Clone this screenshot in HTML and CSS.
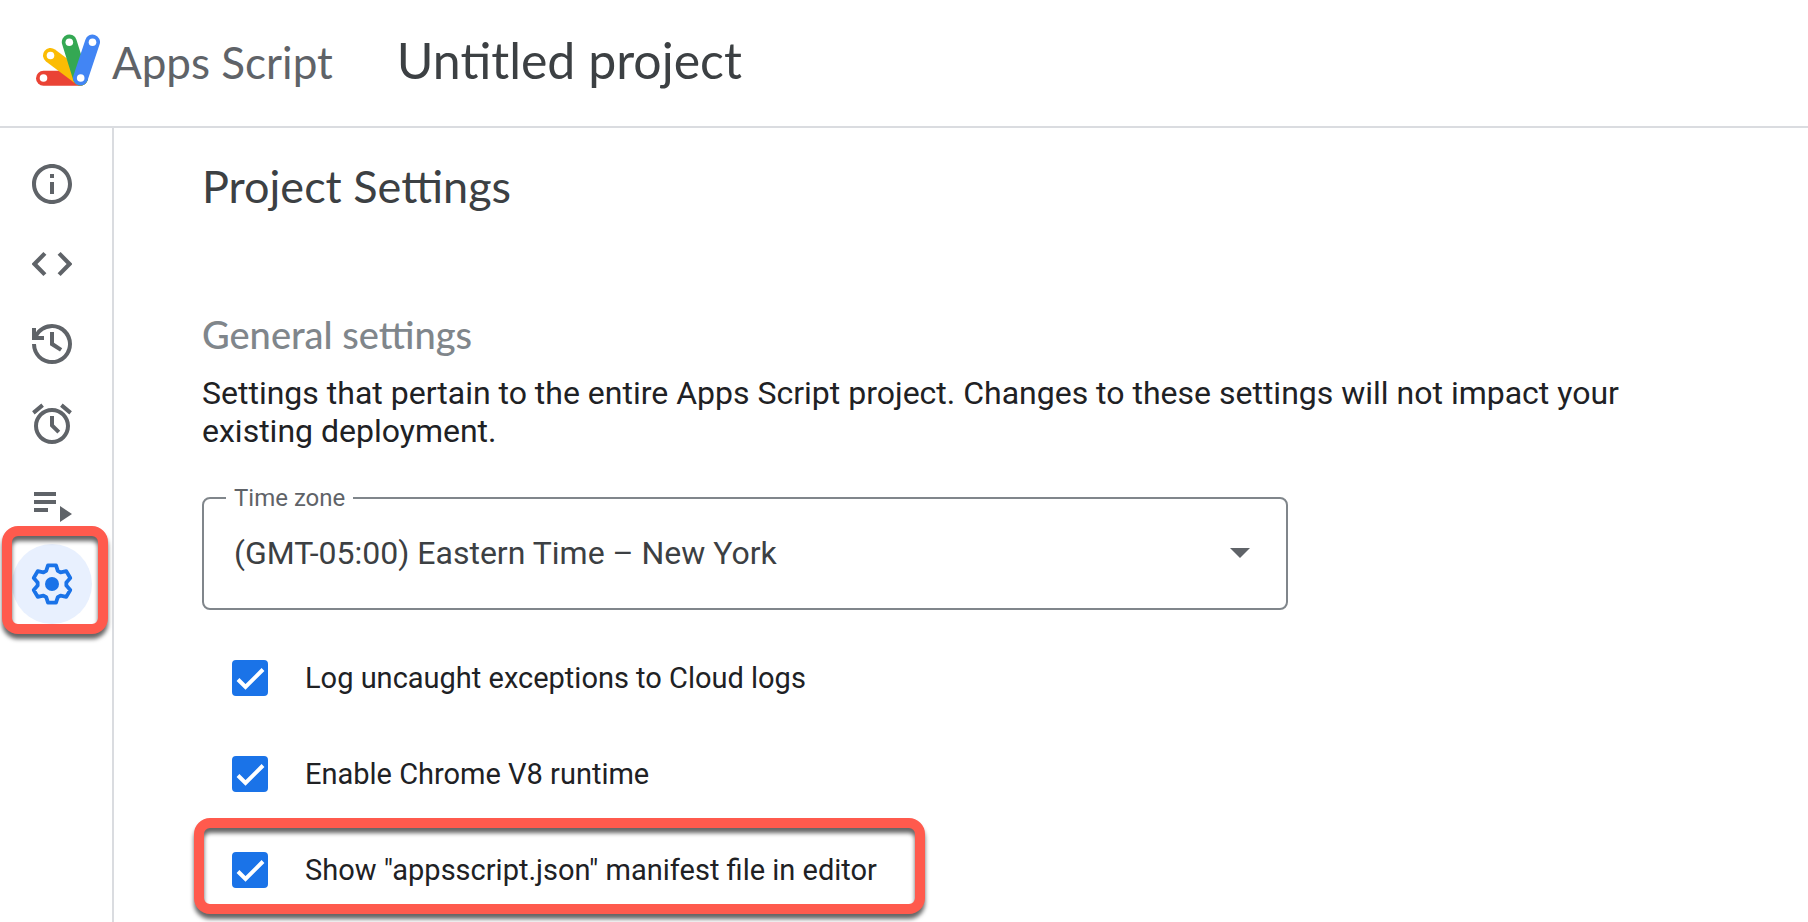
FILE: index.html
```html
<!DOCTYPE html>
<html lang="en">
<head>
<meta charset="utf-8">
<meta name="viewport" content="width=device-width, initial-scale=1">
<title>Untitled project - Project Settings - Apps Script</title>
<link rel="stylesheet" href="styles.css">
</head>
<body>
<header class="topbar">
  <a class="brand" href="#">
    <svg class="brand-logo" viewBox="0 0 64 52" aria-hidden="true" fill="none" stroke-width="15" stroke-linecap="round">
      <path d="M7.5 44.2H44" stroke="#ea4335"/>
      <path d="M14.5 21.5L44.5 44" stroke="#fbbc04"/>
      <path d="M33.3 8L44.5 44" stroke="#34a853"/>
      <path d="M56.5 8L44.5 44" stroke="#4285f4"/>
      <g fill="#fff">
        <circle cx="7.5" cy="44" r="3.8"/>
        <circle cx="14.5" cy="21.5" r="3.8"/>
        <circle cx="33.3" cy="8.2" r="3.8"/>
        <circle cx="56.5" cy="8.2" r="3.8"/>
        <circle cx="44.7" cy="44" r="3.8"/>
      </g>
    </svg>
    <span class="brand-name">Apps Script</span>
  </a>
  <span class="project-name">Untitled project</span>
</header>
<div class="workspace">
  <nav class="rail" aria-label="Project">
    <button class="rail-item" type="button" aria-label="Overview">
      <svg class="icon" viewBox="0 0 24 24"><path d="M11 7h2v2h-2zm0 4h2v6h-2zm1-9C6.48 2 2 6.480 2 12s4.480 10 10 10 10-4.480 10-10S17.520 2 12 2zm0 18c-4.410 0-8-3.590-8-8s3.590-8 8-8 8 3.590 8 8-3.590 8-8 8z"/></svg>
    </button>
    <button class="rail-item" type="button" aria-label="Editor">
      <svg class="icon" viewBox="0 0 24 24"><path d="M7.700 18L9.200 16.600 4.700 12 9.200 7.400 7.700 6 2 11.700v.6zM16.300 18L14.800 16.600 19.300 12 14.800 7.400 16.300 6 22 11.700v.6z"/></svg>
    </button>
    <button class="rail-item" type="button" aria-label="Project history">
      <svg class="icon" viewBox="0 0 24 24"><path d="M12 2C8.700 2 5.800 3.600 4 6.070V4H2v6h6V8H5.100A8 8 0 1 1 4 12H2A10 10 0 1 0 12 2zm-1 4v6.600l5 3.200 1.100-1.700L13 11.400V6z"/></svg>
    </button>
    <button class="rail-item" type="button" aria-label="Triggers">
      <svg class="icon" viewBox="0 0 24 24"><path d="M17.337 1.810l4.607 3.845-1.280 1.535-4.610-3.843zm-10.674 0l1.282 1.536L3.337 7.190l-1.280-1.536zM12 4c-4.970 0-9 4.030-9 9s4.030 9 9 9 9-4.030 9-9-4.030-9-9-9zm0 16c-3.860 0-7-3.140-7-7s3.140-7 7-7 7 3.140 7 7-3.140 7-7 7z"/><path d="M12 8v4.700l3.400 3.400" fill="none" stroke="currentColor" stroke-width="2"/></svg>
    </button>
    <button class="rail-item" type="button" aria-label="Executions">
      <svg class="icon" viewBox="0 0 24 24"><path d="M3 6h11v2H3zm0 4h11v2H3zm0 4h7v2H3zm13-1v8l6-4z"/></svg>
    </button>
    <button class="rail-item rail-item-active" type="button" aria-label="Project Settings" aria-current="page">
      <svg class="icon" viewBox="0 0 24 24"><path d="M9.100 5.400L10 2.700h4l.9 2.700 1.370.8 2.870-.63 2 3.460-1.970 2.180v1.580l1.970 2.180-2 3.460-2.870-.63-1.370.8-.9 2.700h-4l-.9-2.700-1.370-.8-2.870.63-2-3.460 1.970-2.180v-1.580L2.860 9.030l2-3.460 2.870.63z" fill="none" stroke="currentColor" stroke-width="1.900" stroke-linejoin="round"/><circle cx="12" cy="12" r="3.500"/></svg>
      <span class="callout callout-rail"></span>
    </button>
  </nav>
  <main class="content">
    <h1 class="page-title">Project Settings</h1>
    <section class="general">
      <h2 class="section-title">General settings</h2>
      <p class="section-text">Settings that pertain to the entire Apps Script project. Changes to these settings will not impact your existing deployment.</p>
      <fieldset class="field">
        <legend class="field-legend"><label for="timezone">Time zone</label></legend>
        <div class="field-body">
          <select class="field-select" id="timezone">
            <option>(GMT-05:00) Eastern Time – New York</option>
          </select>
          <svg class="field-arrow" viewBox="0 0 20 10" aria-hidden="true"><path d="M0 0h20L10 10z"/></svg>
        </div>
      </fieldset>
      <ul class="options">
        <li class="option">
          <span class="check"><input class="check-input" type="checkbox" id="opt-log" checked><svg class="check-mark" viewBox="0 0 36 36" aria-hidden="true"><path d="M6 19.500l7.500 7.500L31 9.500"/></svg></span>
          <label for="opt-log">Log uncaught exceptions to Cloud logs</label>
        </li>
        <li class="option">
          <span class="check"><input class="check-input" type="checkbox" id="opt-v8" checked><svg class="check-mark" viewBox="0 0 36 36" aria-hidden="true"><path d="M6 19.500l7.500 7.500L31 9.500"/></svg></span>
          <label for="opt-v8">Enable Chrome V8 runtime</label>
        </li>
        <li class="option">
          <span class="check"><input class="check-input" type="checkbox" id="opt-manifest" checked><svg class="check-mark" viewBox="0 0 36 36" aria-hidden="true"><path d="M6 19.500l7.500 7.500L31 9.500"/></svg></span>
          <label for="opt-manifest">Show "appsscript.json" manifest file in editor</label>
          <span class="callout callout-option"></span>
        </li>
      </ul>
    </section>
  </main>
</div>
</body>
</html>
```
FILE: styles.css
```css
* {
  box-sizing: border-box;
}

body {
  margin: 0;
  min-height: 100vh;
  display: flex;
  flex-direction: column;
  background: #fff;
  color: #202124;
  font-family: Roboto, "Liberation Sans", sans-serif;
}

.topbar {
  display: flex;
  align-items: center;
  gap: 64px;
  height: 128px;
  padding: 0 36px 6px;
  border-bottom: 2px solid #dadce0;
  font-family: Lato, "Open Sans", sans-serif;
}

.brand {
  display: flex;
  align-items: center;
  gap: 12px;
  color: #5f6368;
  text-decoration: none;
}

.brand-logo {
  width: 64px;
  height: 52px;
}

.brand-name {
  padding-top: 4px;
  font-size: 44px;
  line-height: 56px;
}

.project-name {
  color: #3c4043;
  font-size: 50px;
  line-height: 56px;
}

.workspace {
  flex: 1;
  display: flex;
}

.rail {
  flex: none;
  display: flex;
  flex-direction: column;
  padding: 16px 20px 0 12px;
  border-right: 2px solid #dadce0;
}

.rail-item {
  position: relative;
  display: grid;
  place-items: center;
  width: 80px;
  height: 80px;
  padding: 0;
  border: 0;
  border-radius: 50%;
  background: none;
  color: #5f6368;
}

.rail-item-active {
  background: #e8f0fe;
  color: #1a73e8;
}

.icon {
  width: 48px;
  height: 48px;
  fill: currentColor;
}

.callout {
  position: absolute;
  border: 10px solid #ff5a4d;
  border-radius: 16px;
  filter: drop-shadow(0 5px 2px rgba(0, 0, 0, 0.6));
  pointer-events: none;
}

.callout-rail {
  inset: -18px -16px -10px -10px;
}

.callout-option {
  inset: -4px -8px 4px;
}

.content {
  flex: 1;
  padding: 30px 160px 0 88px;
}

.page-title,
.section-title {
  margin: 0;
  font-family: Lato, "Open Sans", sans-serif;
}

.page-title {
  margin-bottom: 96px;
  color: #3c4043;
  font-size: 45px;
  font-weight: 400;
  line-height: 56px;
}

.section-title {
  margin-bottom: 16px;
  color: #80868b;
  font-family: "Lato Medium", Lato, "Open Sans", sans-serif;
  font-size: 38px;
  font-weight: 500;
  line-height: 48px;
}

.section-text {
  margin: 0 0 34px;
  font-size: 32px;
  line-height: 38px;
}

.field {
  max-width: 1086px;
  margin: 0;
  padding: 0 22px;
  border: 2px solid #80868b;
  border-radius: 8px;
}

.field-legend {
  padding: 0 8px;
  color: #5f6368;
  font-size: 24px;
  line-height: 28px;
}

.field-body {
  position: relative;
  display: flex;
}

.field-select {
  flex: 1;
  height: 96px;
  padding: 0 8px 14px;
  border: 0;
  appearance: none;
  background: none;
  color: #3c4043;
  font: 32px/40px Roboto, "Liberation Sans", sans-serif;
}

.field-arrow {
  position: absolute;
  top: 36px;
  right: 14px;
  width: 20px;
  height: 10px;
  fill: #5f6368;
  pointer-events: none;
}

.options {
  margin: 20px 0 0;
  padding: 0;
  list-style: none;
}

.option {
  position: relative;
  display: flex;
  align-items: center;
  gap: 37px;
  width: fit-content;
  height: 96px;
  padding: 0 40px 0 30px;
  font-size: 29px;
  line-height: 40px;
}

.check {
  position: relative;
  display: grid;
  width: 36px;
  height: 36px;
}

.check-input {
  width: 36px;
  height: 36px;
  margin: 0;
  border: 2px solid #5f6368;
  border-radius: 4px;
  appearance: none;
}

.check-input:checked {
  border-color: #1a73e8;
  background: #1a73e8;
}

.check-mark {
  position: absolute;
  inset: 0;
  fill: none;
  stroke: #fff;
  stroke-width: 4;
  pointer-events: none;
}
```
